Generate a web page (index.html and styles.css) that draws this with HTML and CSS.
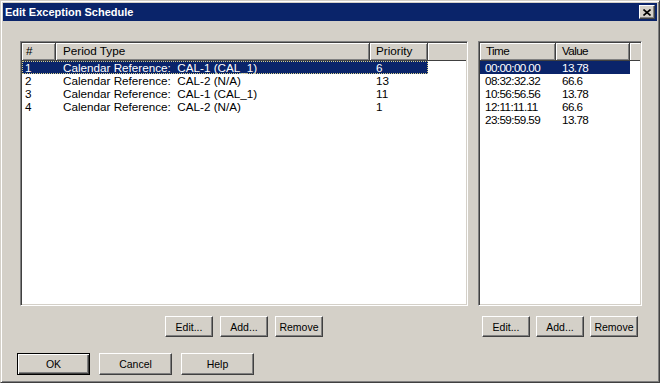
FILE: index.html
```html
<!DOCTYPE html>
<html lang="en">
<head>
    <meta charset="UTF-8">
    <meta name="viewport" content="width=device-width, initial-scale=1.0">
    <title>Edit Exception Schedule</title>

    <link rel="stylesheet" href="styles.css">
</head>
<body>
    <div class="window">
        <div class="titlebar">
            <span class="title">Edit Exception Schedule</span>
            <div class="close-btn">
                <svg width="8" height="7" viewBox="0 0 8 7">
                    <path d="M0.5 0.5 L7.5 6.5 M7.5 0.5 L0.5 6.5" stroke="#000" stroke-width="1.6" fill="none"/>
                </svg>
            </div>
        </div>

        <div class="panes">
            <div class="pane pane-periods">
                <div class="listview">
                    <div class="lv-header">
                        <div class="lv-col col-num">#</div>
                        <div class="lv-col col-type">Period Type</div>
                        <div class="lv-col col-prio">Priority</div>
                        <div class="lv-col lv-filler"></div>
                    </div>
                    <div class="lv-row selected focused">
                        <div class="lv-cell col-num">1</div>
                        <div class="lv-cell col-type">Calendar Reference:  CAL-1 (CAL_1)</div>
                        <div class="lv-cell col-prio">6</div>
                    </div>
                    <div class="lv-row">
                        <div class="lv-cell col-num">2</div>
                        <div class="lv-cell col-type">Calendar Reference:  CAL-2 (N/A)</div>
                        <div class="lv-cell col-prio">13</div>
                    </div>
                    <div class="lv-row">
                        <div class="lv-cell col-num">3</div>
                        <div class="lv-cell col-type">Calendar Reference:  CAL-1 (CAL_1)</div>
                        <div class="lv-cell col-prio">11</div>
                    </div>
                    <div class="lv-row">
                        <div class="lv-cell col-num">4</div>
                        <div class="lv-cell col-type">Calendar Reference:  CAL-2 (N/A)</div>
                        <div class="lv-cell col-prio">1</div>
                    </div>
                </div>
                <div class="pane-buttons">
                    <button class="btn">Edit...</button>
                    <button class="btn">Add...</button>
                    <button class="btn">Remove</button>
                </div>
            </div>

            <div class="pane pane-values">
                <div class="listview">
                    <div class="lv-header">
                        <div class="lv-col col-time">Time</div>
                        <div class="lv-col col-value">Value</div>
                        <div class="lv-col lv-filler"></div>
                    </div>
                    <div class="lv-row selected">
                        <div class="lv-cell col-time">00:00:00.00</div>
                        <div class="lv-cell col-value">13.78</div>
                    </div>
                    <div class="lv-row">
                        <div class="lv-cell col-time">08:32:32.32</div>
                        <div class="lv-cell col-value">66.6</div>
                    </div>
                    <div class="lv-row">
                        <div class="lv-cell col-time">10:56:56.56</div>
                        <div class="lv-cell col-value">13.78</div>
                    </div>
                    <div class="lv-row">
                        <div class="lv-cell col-time">12:11:11.11</div>
                        <div class="lv-cell col-value">66.6</div>
                    </div>
                    <div class="lv-row">
                        <div class="lv-cell col-time">23:59:59.59</div>
                        <div class="lv-cell col-value">13.78</div>
                    </div>
                </div>
                <div class="pane-buttons">
                    <button class="btn">Edit...</button>
                    <button class="btn">Add...</button>
                    <button class="btn">Remove</button>
                </div>
            </div>
        </div>

        <div class="dialog-buttons">
            <button class="btn btn-wide btn-default">OK</button>
            <button class="btn btn-wide">Cancel</button>
            <button class="btn btn-wide">Help</button>
        </div>
    </div>
</body>
</html>
```

FILE: styles.css
```css
*{
    margin: 0px;
    padding: 0px;
    box-sizing: border-box;
}

body{
    font-family: "Liberation Sans", Arial, sans-serif;
    background: #d4d0c8;
}

.window{
    width: 660px;
    height: 383px;
    padding: 2px;
    background: #d4d0c8;
    border: 1px solid;
    border-color: #d4d0c8 #404040 #404040 #d4d0c8;
    box-shadow: inset 1px 1px #fff, inset -1px -1px #808080;
}

/* title bar */
.titlebar{
    height: 18px;
    background: #0a246a;
    display: flex;
    align-items: center;
    justify-content: space-between;
    padding: 0 2px 0 2px;
}

.titlebar .title{
    color: #fff;
    font-weight: bold;
    font-size: 11px;
}

.close-btn{
    width: 16px;
    height: 14px;
    background: #d4d0c8;
    border: 1px solid;
    border-color: #fff #404040 #404040 #fff;
    box-shadow: inset -1px -1px #808080;
    display: flex;
    align-items: center;
    justify-content: center;
}

.close-btn svg{
    display: block;
}

/* list panes */
.panes{
    display: flex;
    gap: 10px;
    padding: 20px 0 0 17px;
}

.pane{
    display: flex;
    flex-direction: column;
}

.pane-periods{
    width: 448px;
}

.pane-values{
    width: 164px;
}

.listview{
    height: 265px;
    background: #fff;
    padding: 1px;
    border: 1px solid;
    border-color: #808080 #fff #fff #808080;
    box-shadow: inset 1px 1px #404040, inset -1px -1px #d4d0c8;
    font-size: 11.7px;
    color: #000;
}

.pane-values .listview{
    letter-spacing: -0.6px;
}

.lv-header{
    display: flex;
    height: 18px;
}

.lv-col{
    height: 18px;
    line-height: 16px;
    padding-left: 6px;
    background: #d4d0c8;
    border-right: 1px solid #404040;
    border-bottom: 1px solid #404040;
    box-shadow: inset 1px 1px #fff, inset -1px -1px #808080;
    white-space: nowrap;
}

.lv-filler{
    flex: 1;
    border-right: none;
    box-shadow: inset 1px 1px #fff;
}

.lv-row{
    display: flex;
    height: 13px;
    line-height: 13px;
    width: max-content;
}

.lv-cell{
    padding-left: 6px;
    white-space: pre;
    overflow: hidden;
}

.lv-row.selected{
    background: #0a246a;
    color: #fff;
}

.lv-row.focused{
    outline: 1px dotted #d6cf8a;
    outline-offset: -1px;
}

.col-num{ width: 34px; padding-left: 4px; }
.lv-cell.col-num{ padding-left: 3px; }
.col-type{ width: 314px; padding-left: 7px; }
.lv-cell.col-type{ padding-left: 7px; }
.col-prio{ width: 58px; }

.col-time{ width: 76px; }
.lv-cell.col-time{ padding-left: 5px; }
.col-value{ width: 74px; }

/* buttons */
.pane-buttons{
    display: flex;
    justify-content: center;
    gap: 7px;
    margin-top: 10px;
}

.pane-values .pane-buttons{
    gap: 6px;
}

.btn{
    width: 48px;
    height: 21px;
    font-family: "Liberation Sans", Arial, sans-serif;
    font-size: 10.5px;
    color: #000;
    background: #d4d0c8;
    border: 1px solid;
    border-color: #fff #404040 #404040 #fff;
    box-shadow: inset -1px -1px #808080;
    outline: none;
}

.dialog-buttons{
    display: flex;
    gap: 9px;
    padding: 16px 0 0 14px;
}

.btn-wide{
    width: 73px;
    height: 22px;
}

.btn-default{
    border: 1px solid #000;
    box-shadow: inset 1px 1px #fff, inset -1px -1px #404040, inset -2px -2px #808080;
}
```
